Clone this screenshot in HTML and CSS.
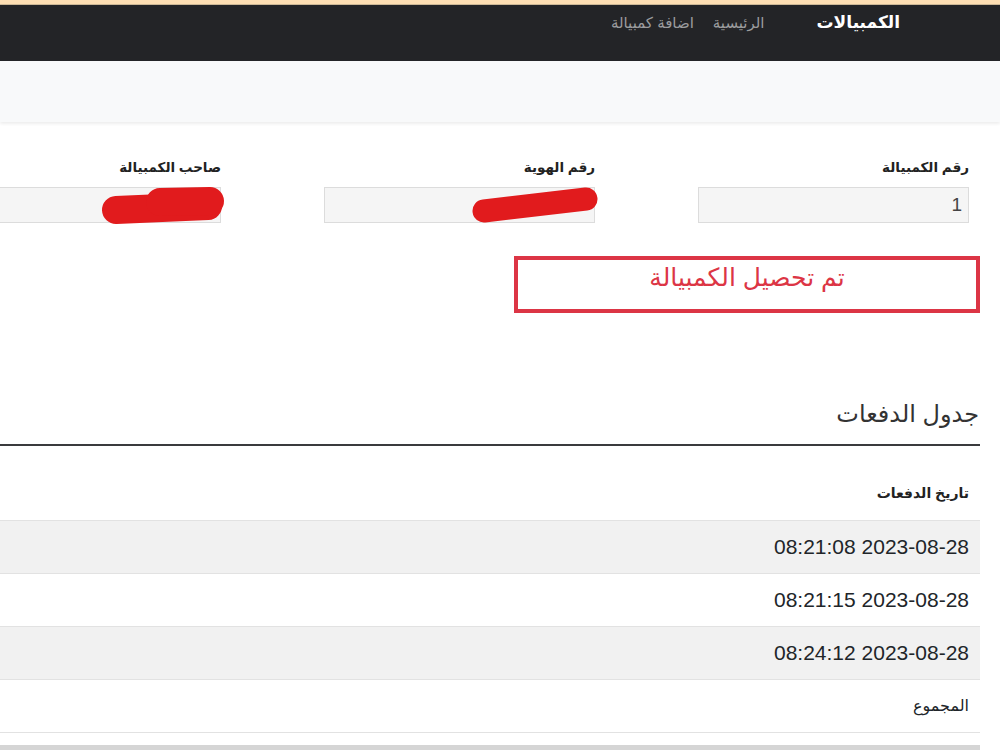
FILE: index.html
```html
<!DOCTYPE html>
<html lang="ar" dir="rtl">
<head>
  <meta charset="UTF-8" />
  <title>الكمبيالات</title>
  <meta name="viewport" content="width=device-width, initial-scale=1.0" />
  <link rel="stylesheet" href="styles.css">
</head>
<body>

  <div class="topline"></div>

  <nav class="navbar">
    <span class="brand">الكمبيالات</span>
    <a href="#">الرئيسية</a>
    <a href="#">اضافة كمبيالة</a>
  </nav>

  <div class="subbar"></div>

  <main class="page">
    <div class="fields">
      <div class="field">
        <label>رقم الكمبيالة</label>
        <div class="input-wrap">
          <input type="text" value="1" readonly />
        </div>
      </div>
      <div class="field">
        <label>رقم الهوية</label>
        <div class="input-wrap">
          <input type="text" value="" readonly />
          <!-- خط التمويه -->
          <svg class="scribble" width="271" height="36">
            <line x1="160" y1="24" x2="262" y2="12" />
          </svg>
        </div>
      </div>
      <div class="field">
        <label>صاحب الكمبيالة</label>
        <div class="input-wrap">
          <input type="text" value="" readonly />
          <svg class="scribble fat" width="271" height="36">
            <line x1="166" y1="23" x2="258" y2="19" />
            <line x1="210" y1="15" x2="260" y2="14" />
          </svg>
        </div>
      </div>
    </div>

    <div class="status">تم تحصيل الكمبيالة</div>

    <h2 class="section-title">جدول الدفعات</h2>

    <table class="payments">
      <thead>
        <tr><th>تاريخ الدفعات</th></tr>
      </thead>
      <tbody>
        <tr class="odd"><td class="date">2023-08-28 08:21:08</td></tr>
        <tr><td class="date">2023-08-28 08:21:15</td></tr>
        <tr class="odd"><td class="date">2023-08-28 08:24:12</td></tr>
        <tr><td class="total">المجموع</td></tr>
      </tbody>
    </table>

    <div class="bottombar"></div>
  </main>

</body>
</html>
```

FILE: styles.css
```css
html {
  overflow-x: hidden;
}
body {
  margin: 0;
  font-family: "Liberation Sans", "DejaVu Sans", sans-serif;
  background: #fff;
  color: #212529;
}

.topline {
  height: 4px;
  background: #fedfb4;
  border-bottom: 1px solid #cdb897;
}

.navbar {
  height: 56px;
  box-sizing: border-box;
  background: #232427;
  display: flex;
  align-items: flex-start;
  padding: 3px 100px 0 0;
}
.brand {
  color: #fff;
  font-weight: bold;
  font-size: 17px;
  line-height: 30px;
  margin-left: 52px;
}
.navbar a {
  color: #9b9c9e;
  text-decoration: none;
  font-size: 15px;
  line-height: 30px;
  margin-left: 19px;
}

.subbar {
  height: 61px;
  background: #f8f9fa;
  box-shadow: 0 2px 3px rgba(0,0,0,0.07);
}

.page {
  width: 1110px;
  margin-right: 20px;
}

.fields {
  display: grid;
  grid-template-columns: 374px 374px 374px;
  padding: 35px 11px 0 0;
}
.field label {
  display: block;
  font-weight: bold;
  font-size: 13.5px;
  line-height: 22px;
  color: #222;
  margin-bottom: 8px;
}
.input-wrap {
  position: relative;
  width: 271px;
}
.input-wrap input {
  display: block;
  width: 271px;
  height: 36px;
  box-sizing: border-box;
  border: 1px solid #dcdcdc;
  background: #f5f5f5;
  padding: 0 6px;
  font-family: inherit;
  font-size: 19px;
  color: #444;
  text-align: right;
}
.scribble {
  position: absolute;
  top: 0;
  left: 0;
  overflow: visible;
}
.scribble line {
  stroke: #e11b1d;
  stroke-width: 23;
  stroke-linecap: round;
}
.scribble.fat line {
  stroke-width: 28;
}

.status {
  width: 466px;
  height: 57px;
  box-sizing: border-box;
  margin-top: 33px;
  border: 4px solid #dc3545;
  color: #dc3545;
  font-size: 25px;
  text-align: center;
  line-height: 34px;
}

.section-title {
  margin: 85px 0 0 0;
  padding-bottom: 15px;
  border-bottom: 2px solid #3a3b3d;
  font-weight: normal;
  font-size: 24px;
  line-height: 31px;
  color: #333;
  padding-right: 1px;
}

.payments {
  width: 100%;
  border-collapse: collapse;
}
.payments th {
  text-align: right;
  font-weight: bold;
  font-size: 14px;
  line-height: 22px;
  padding: 36px 11px 16px 11px;
  border-bottom: 1px solid #e2e2e2;
  color: #222;
}
.payments td {
  text-align: right;
  padding: 15px 11px;
  line-height: 22px;
  border-bottom: 1px solid #e2e2e2;
}
.payments tr.odd td {
  background: #f1f1f1;
}
.payments td.date {
  font-size: 21px;
}
.payments td.total {
  font-size: 16px;
}

.bottombar {
  margin-top: 12px;
  height: 10px;
  background: #d5d5d5;
}
```
